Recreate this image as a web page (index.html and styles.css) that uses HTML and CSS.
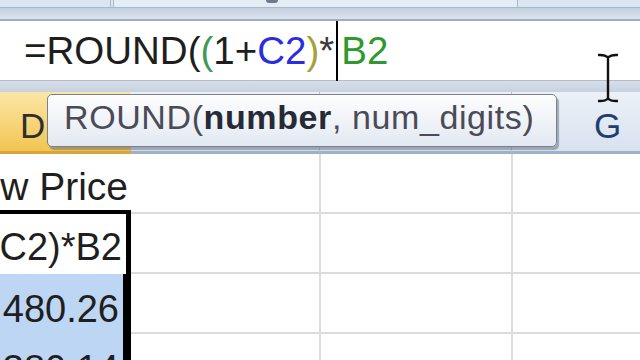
FILE: index.html
```html
<!DOCTYPE html>
<html lang="en">
<head>
  <meta charset="UTF-8" />
  <meta name="viewport" content="width=device-width, initial-scale=1.0" />
  <title>ROUND formula</title>
  <link rel="stylesheet" href="styles.css">
</head>
<body>
  <!-- cinta superior -->
  <div class="ribbon">
    <div class="rb-left"></div>
    <div class="rb-mid"><span class="knob"></span></div>
  </div>
  <div class="band1"></div>

  <!-- barra de formulas -->
  <div class="formula">
    <span>=ROUND(</span><span class="p1">(</span><span>1+</span><span class="ref-c">C2</span><span class="p2">)</span><span class="op">*</span><span class="caret"></span><span class="ref-b">B2</span>
  </div>
  <div class="band2"></div>

  <!-- encabezados de columna -->
  <div class="colheads">
    <div class="ch d">D</div>
    <div class="ch e"></div>
    <div class="ch f"></div>
    <div class="ch g">G</div>
  </div>

  <div class="row">
    <div class="cell d d1">New Price</div>
    <div class="cell e"></div>
    <div class="cell f"></div>
    <div class="cell g"></div>
  </div>
  <div class="row">
    <div class="cell d active">=ROUND((1+C2)*B2</div>
    <div class="cell e"></div>
    <div class="cell f"></div>
    <div class="cell g"></div>
  </div>
  <div class="row">
    <div class="cell d sel">480.26</div>
    <div class="cell e"></div>
    <div class="cell f"></div>
    <div class="cell g"></div>
  </div>
  <div class="row">
    <div class="cell d sel">380.14</div>
    <div class="cell e"></div>
    <div class="cell f"></div>
    <div class="cell g"></div>
  </div>

  <!-- ayuda de la funcion -->
  <div class="tooltip">ROUND(<b>number</b>, num_digits)</div>

  <!-- cursor del raton -->
  <svg class="ibeam" width="24" height="52" viewBox="0 0 24 52">
    <path d="M2 3 Q9 2.5 12 5.5 Q15 2.5 22 3 M12 5.5 V46.5 M2 49 Q9 49.5 12 46.5 Q15 49.5 22 49" fill="none" stroke="#111" stroke-width="2.4"/>
  </svg>
</body>
</html>
```

FILE: styles.css
```css
body {
  margin: 0;
  width: 640px;
  height: 360px;
  overflow: hidden;
  position: relative;
  background: #fff;
  font-family: "Liberation Sans", Arial, sans-serif;
}

.ribbon {
  height: 7px;
  display: flex;
  background: #dce6f2;
  border-bottom: 1px solid #a9b9cd;
}

.rb-left {
  width: 110px;
  border-right: 1px solid #a9b9cd;
}

.rb-mid {
  margin-left: 2px;
  width: 403px;
  border-left: 1px solid #a9b9cd;
  border-right: 1px solid #a9b9cd;
  background: #e4ecf6;
  position: relative;
}

.knob {
  position: absolute;
  left: 152px;
  top: 0;
  width: 12px;
  height: 3px;
  background: #6f7b8c;
  border-radius: 0 0 6px 6px;
}

.band1 {
  height: 11px;
  background: linear-gradient(#c4cfde, #dbe3ee);
  border-bottom: 2px solid #9fadc0;
}

.formula {
  height: 59px;
  border-bottom: 1px solid #b3bdca;
  padding-left: 24px;
  display: flex;
  align-items: center;
  font-size: 38.5px;
  color: #1e1e1e;
  white-space: nowrap;
}

.formula .p1 { color: #3f9a5a; }
.formula .p2 { color: #a3a232; }
.formula .ref-c { color: #2b2de0; }
.formula .ref-b { color: #2e9a2e; }
.formula .op { color: #3a3a3a; }

.caret {
  display: inline-block;
  width: 2px;
  height: 60px;
  margin: 0 3px 0 2px;
  background: #000;
}

.band2 {
  height: 11px;
  background: linear-gradient(#d5dee9, #c8d2df);
}

.colheads {
  display: flex;
  height: 62px;
}

.ch {
  box-sizing: border-box;
  flex: none;
  height: 62px;
  padding-top: 8px;
  display: flex;
  align-items: center;
  justify-content: center;
  font-size: 35px;
  color: #213f6e;
  background: linear-gradient(#ebf1f8, #d8e2ef);
  border-bottom: 3px solid #9fb1c8;
  border-right: 1px solid #b4c2d4;
}

.ch.d {
  width: 131px;
  justify-content: flex-start;
  padding-left: 20px;
  color: #2f2f2f;
  background: linear-gradient(#fce6a6, #f2c552);
  border-bottom-color: #d9a53a;
  border-right: none;
}

.ch.e { width: 189px; }
.ch.f { width: 192px; }
.ch.g { width: 192px; }

.row {
  display: flex;
  height: 60px;
}

.cell {
  box-sizing: border-box;
  flex: none;
  height: 60px;
  display: flex;
  align-items: flex-end;
  justify-content: flex-end;
  padding: 0 4px 4px 0;
  font-size: 38px;
  line-height: 1;
  color: #1f1f1f;
  white-space: nowrap;
  border-bottom: 2px solid #dcdcdc;
  border-right: 2px solid #dcdcdc;
}

.cell.d { width: 131px; }
.cell.e { width: 190px; }
.cell.f { width: 192px; }
.cell.g { width: 192px; }

.cell.d1 {
  font-size: 39px;
  padding-right: 3px;
  border-right: none;
  border-bottom: 4px solid #000;
}

.cell.active {
  background: #fff;
  border-bottom: none;
  border-right: 5px solid #000;
  padding: 0 4px 8px 0;
}

.cell.sel {
  background: #bdd6f3;
  border-bottom: none;
  border-right: 8px solid #000;
  padding: 0 4px 6px 0;
}

.tooltip {
  position: absolute;
  left: 47px;
  top: 94px;
  width: 510px;
  height: 53px;
  box-sizing: border-box;
  display: flex;
  align-items: center;
  padding: 0 0 6px 16px;
  font-size: 34px;
  letter-spacing: 0.6px;
  color: #4a4b56;
  white-space: nowrap;
  background: linear-gradient(#fdfdfe, #e3e9f2);
  border: 1px solid #7c8089;
  border-radius: 5px;
  box-shadow: 2px 3px 1px rgba(95, 105, 120, 0.5);
}

.tooltip b {
  color: #262a36;
}

.ibeam {
  position: absolute;
  left: 596px;
  top: 52px;
}
```
